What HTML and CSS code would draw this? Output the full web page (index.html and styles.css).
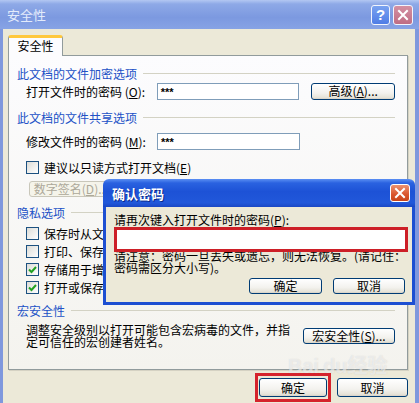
FILE: index.html
```html
<!DOCTYPE html>
<html lang="zh">
<head>
  <meta charset="UTF-8" />
  <title>安全性</title>
  <link rel="stylesheet" href="styles.css">
</head>
<body>
  <div class="window">
    <div class="titlebar">
      <span class="title">安全性</span>
      <div class="title-buttons">
        <span class="tbtn help">?</span>
        <span class="tbtn close">
          <svg width="12" height="12" viewBox="0 0 12 12"><path d="M2 2 L10 10 M10 2 L2 10" stroke="#fff" stroke-width="2" stroke-linecap="square"/></svg>
        </span>
      </div>
    </div>

    <div class="body">
      <div class="tab">安全性</div>
      <div class="panel">
        <div class="group">此文档的文件加密选项</div>
        <div class="row">
          <span class="field-label">打开文件时的密码 (<u>O</u>):</span>
          <div class="textbox">***</div>
          <button class="btn btn-adv">高级(<u>A</u>)...</button>
        </div>

        <div class="group gap-8">此文档的文件共享选项</div>
        <div class="row gap-6">
          <span class="field-label">修改文件时的密码 (<u>M</u>):</span>
          <div class="textbox">***</div>
        </div>
        <div class="check gap-8">
          <span class="box"></span>
          <span>建议以只读方式打开文档(<u>E</u>)</span>
        </div>
        <button class="btn btn-sig" disabled>数字签名(<u>D</u>)...</button>

        <div class="group gap-6">隐私选项</div>
        <div class="check gap-3">
          <span class="box"></span>
          <span>保存时从文件属性中删除个人信息(<u>R</u>)</span>
        </div>
        <div class="check">
          <span class="box"></span>
          <span>打印、保存或发送包含修订或批注的文件之前给出警告(<u>W</u>)</span>
        </div>
        <div class="check">
          <span class="box checked"><svg width="11" height="11" viewBox="0 0 11 11"><path d="M2 5.5 L4.5 8 L9 3" fill="none" stroke="#21a121" stroke-width="2"/></svg></span>
          <span>存储用于增强合并精确性的随机编号(<u>A</u>)</span>
        </div>
        <div class="check">
          <span class="box checked"><svg width="11" height="11" viewBox="0 0 11 11"><path d="M2 5.5 L4.5 8 L9 3" fill="none" stroke="#21a121" stroke-width="2"/></svg></span>
          <span>打开或保存时标记可见(<u>V</u>)</span>
        </div>

        <div class="group gap-5">宏安全性</div>
        <div class="macro-row">
          <span class="macro-text">调整安全级别以打开可能包含宏病毒的文件，并指定可信任的宏创建者姓名。</span>
          <button class="btn btn-macro">宏安全性(<u>S</u>)...</button>
        </div>
      </div>

      <div class="footer">
        <span class="mark"><button class="btn btn-ok">确定</button></span>
        <button class="btn btn-cancel">取消</button>
      </div>
    </div>

    <div class="watermark">Bai<span class="paw">du</span>经验</div>

    <div class="modal">
      <div class="modal-title">
        <span>确认密码</span>
        <span class="modal-close">
          <svg width="12" height="12" viewBox="0 0 12 12"><path d="M2 2 L10 10 M10 2 L2 10" stroke="#fff" stroke-width="2" stroke-linecap="square"/></svg>
        </span>
      </div>
      <div class="modal-body">
        <div class="modal-label">请再次键入打开文件时的密码(<u>P</u>):</div>
        <div class="pw-box"></div>
        <div class="note">请注意：密码一旦丢失或遗忘，则无法恢复。(请记住：<br>密码需区分大小写)。</div>
        <div class="modal-buttons">
          <button class="btn btn-m-ok">确定</button>
          <button class="btn btn-m-cancel">取消</button>
        </div>
      </div>
    </div>
  </div>
</body>
</html>
```

FILE: styles.css
```css
* {
  box-sizing: border-box;
}

body {
  margin: 0;
  width: 419px;
  height: 403px;
  overflow: hidden;
  font-family: "Noto Sans CJK SC", "Liberation Sans", sans-serif;
  font-size: 12px;
  color: #000;
  background: #ece9d8;
}

u {
  text-decoration: underline;
}

.window {
  position: relative;
  width: 419px;
  height: 403px;
  background: #ece9d8;
}

/* title bar (inactive) */
.titlebar {
  height: 29px;
  display: flex;
  align-items: center;
  padding: 0 6px 0 7px;
  background: linear-gradient(#b3c7f2, #8ea9e7 4px, #7c99e0 60%, #87a3e5);
}
.title {
  flex: 1;
  color: #e3ebfb;
  font-size: 13px;
  line-height: 16px;
}
.title-buttons {
  display: flex;
  gap: 3px;
}
.tbtn {
  height: 20px;
  border: 1px solid #f2f5fd;
  border-radius: 3px;
  display: flex;
  align-items: center;
  justify-content: center;
  color: #fff;
}
.help {
  width: 19px;
  background: linear-gradient(#7aa2f0, #4f7de6);
  font-family: "Liberation Sans", sans-serif;
  font-weight: bold;
  font-size: 15px;
}
.close {
  width: 20px;
  background: linear-gradient(#d490a2, #bf6d84);
}

/* dialog body */
.body {
  height: 374px;
  border-left: 3px solid #7f98dd;
  border-right: 4px solid #7f98dd;
  padding: 6px 7px 0 5px;
}

.tab {
  position: relative;
  z-index: 1;
  width: 55px;
  height: 21px;
  margin-bottom: -1px;
  background: #fcfcfe;
  border: 1px solid #919b9c;
  border-top: 3px solid #ffc83c;
  border-bottom: none;
  border-radius: 3px 3px 0 0;
  text-align: center;
  line-height: 16px;
}

.panel {
  height: 315px;
  border: 1px solid #919b9c;
  background: linear-gradient(#fcfcfe, #f4f3ee);
  box-shadow: 1px 1px 0 #d5d2c3;
  padding: 8px 12px 0 8px;
}

.group {
  height: 18px;
  display: flex;
  align-items: center;
  color: #2151c6;
  white-space: nowrap;
}
.group::after {
  content: "";
  flex: 1;
  height: 1px;
  margin-left: 6px;
  background: #d3d2c4;
}

.gap-3 { margin-top: 3px; }
.gap-5 { margin-top: 5px; }
.gap-6 { margin-top: 6px; }
.gap-8 { margin-top: 8px; }

.row {
  display: flex;
  align-items: center;
  height: 18px;
  padding-left: 9px;
}
.field-label {
  width: 131px;
  white-space: nowrap;
}
.textbox {
  width: 143px;
  height: 17px;
  border: 1px solid #7f9db9;
  background: #fff;
  padding-left: 3px;
  line-height: 16px;
  font-family: "Liberation Sans", sans-serif;
  font-weight: bold;
  font-size: 11px;
}

.btn {
  font-family: "Noto Sans CJK SC", "Liberation Sans", sans-serif;
  font-size: 12px;
  line-height: 12px;
  color: #000;
  padding: 0;
  border: 1px solid #003c74;
  border-radius: 3px;
  background: linear-gradient(#ffffff, #f3f2ee 60%, #e6e3d8 90%, #d6d0c5);
  white-space: nowrap;
}
.btn-adv {
  width: 84px;
  height: 17px;
  margin-left: 12px;
}
.btn-sig {
  display: block;
  width: 84px;
  height: 16px;
  margin: 5px 0 0 12px;
  color: #aca899;
  border-color: #c9c7ba;
  background: #f5f4ea;
}

.check {
  display: flex;
  align-items: center;
  gap: 5px;
  height: 18px;
  padding-left: 9px;
  white-space: nowrap;
}
.box {
  width: 13px;
  height: 13px;
  border: 1px solid #1c5180;
  background: linear-gradient(135deg, #dcdcd7, #ffffff);
  display: flex;
  align-items: center;
  justify-content: center;
}

.macro-row {
  display: flex;
  align-items: center;
  height: 25px;
  margin-top: 4px;
  padding-left: 9px;
}
.macro-text {
  width: 266px;
  line-height: 12px;
}
.btn-macro {
  width: 92px;
  height: 16px;
  margin-left: auto;
}

.footer {
  display: flex;
  justify-content: flex-end;
  gap: 10px;
  margin-top: 8px;
}
.btn-ok {
  width: 68px;
  height: 19px;
  display: block;
}
.btn-cancel {
  width: 71px;
  height: 19px;
}
.mark {
  display: block;
  margin: -5px -4px;
  padding: 2px 1px;
  border: 3px solid #d5232c;
}

/* faint site watermark */
.watermark {
  position: absolute;
  left: 288px;
  top: 350px;
  font-family: "Liberation Sans", "Noto Sans CJK SC", sans-serif;
  font-weight: bold;
  font-size: 20px;
  color: rgba(255, 255, 255, 0.55);
  text-shadow: 0 0 1px rgba(150, 150, 150, 0.35);
  pointer-events: none;
}
.paw {
  margin-left: 4px;
}

/* confirm password modal */
.modal {
  position: absolute;
  left: 103px;
  top: 179px;
  width: 312px;
  height: 126px;
}
.modal-title {
  height: 28px;
  display: flex;
  align-items: center;
  justify-content: space-between;
  padding: 0 5px 0 9px;
  border-radius: 6px 6px 0 0;
  background: linear-gradient(#5b8ff3, #2a62e0 4px, #1d52d6 45%, #2158da 85%, #1a47c4);
  color: #fff;
  font-weight: bold;
  font-size: 13px;
  text-shadow: 1px 1px 0 #0a2a8a;
}
.modal-close {
  width: 20px;
  height: 18px;
  border: 1px solid #fff;
  border-radius: 3px;
  background: linear-gradient(#ec9270, #d9542c 60%, #c84418);
  display: flex;
  align-items: center;
  justify-content: center;
}
.modal-body {
  height: 98px;
  background: #ece9d8;
  border: 3px solid #1d4fd2;
  border-top: none;
  padding: 7px 4px 0 8px;
}
.modal-label {
  line-height: 12px;
  white-space: nowrap;
}
.pw-box {
  position: relative;
  height: 25px;
  margin-top: 1px;
  background: #fff;
  border: 3px solid #cd1f27;
}
.note {
  margin-top: -2px;
  line-height: 12px;
  white-space: nowrap;
}
.modal-buttons {
  display: flex;
  justify-content: flex-end;
  gap: 11px;
  margin-top: 4px;
  padding-right: 3px;
}
.btn-m-ok {
  width: 73px;
  height: 16px;
}
.btn-m-cancel {
  width: 72px;
  height: 16px;
}
```
